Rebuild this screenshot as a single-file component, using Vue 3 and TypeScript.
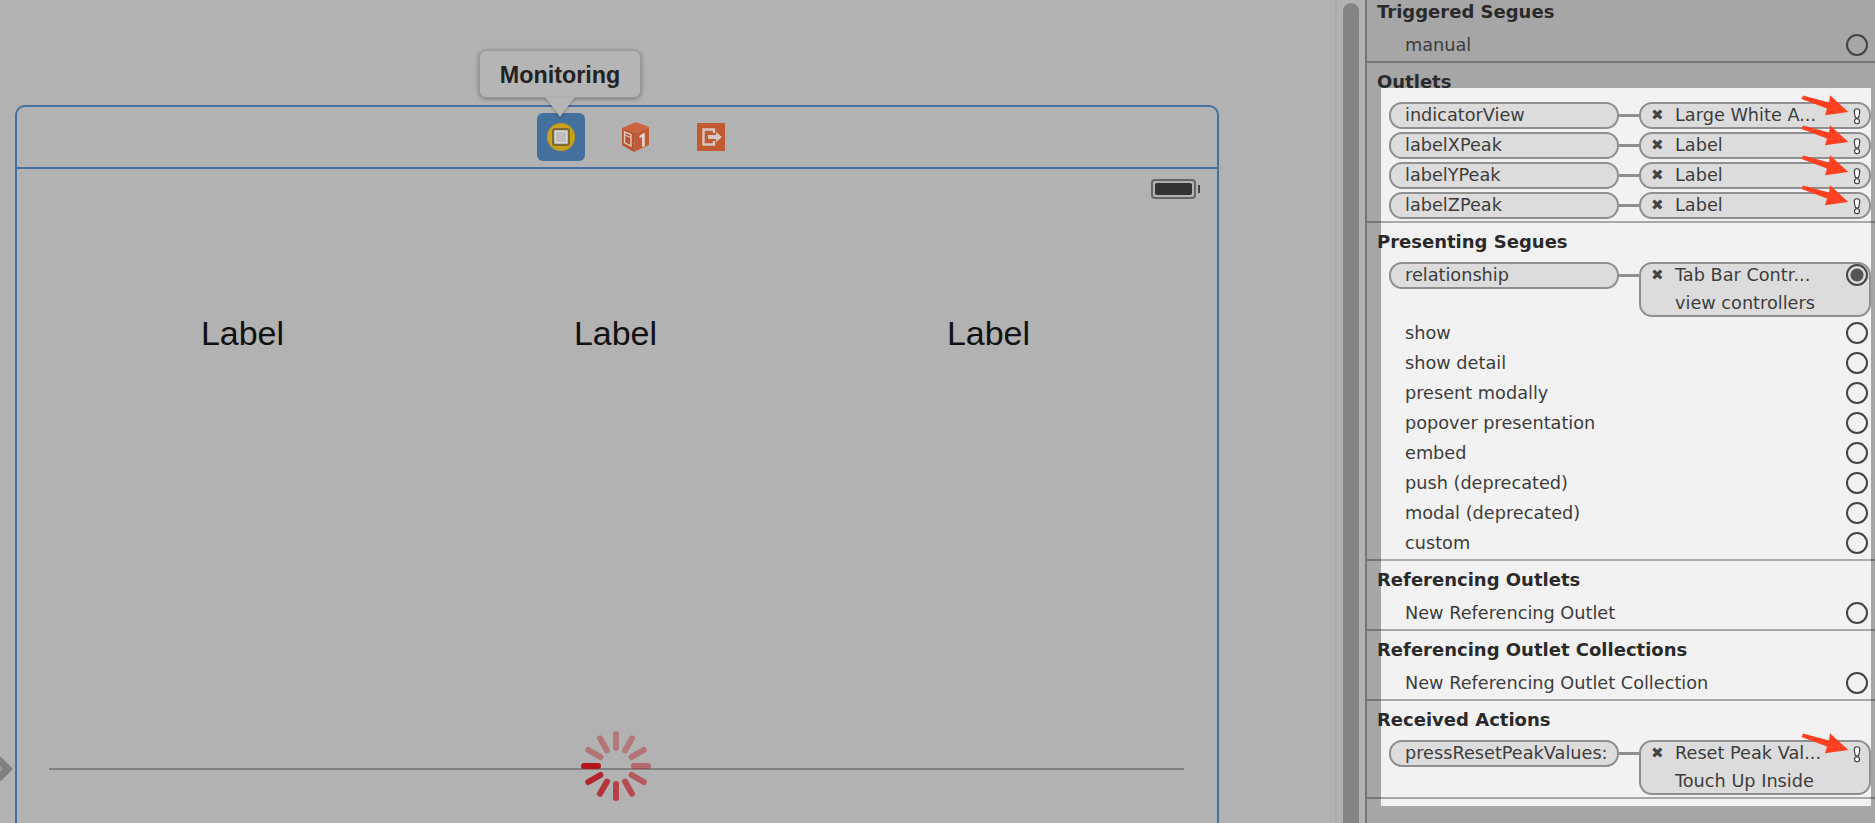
<script setup lang="ts">
interface Row {
  name: string
  target?: string
  sub?: string
  warn?: boolean
  filled?: boolean
}

interface Section {
  title: string
  rows: Row[]
}

const sections: Section[] = [
  { title: 'Triggered Segues', rows: [{ name: 'manual' }] },
  {
    title: 'Outlets',
    rows: [
      { name: 'indicatorView', target: 'Large White A...', warn: true },
      { name: 'labelXPeak', target: 'Label', warn: true },
      { name: 'labelYPeak', target: 'Label', warn: true },
      { name: 'labelZPeak', target: 'Label', warn: true },
    ],
  },
  {
    title: 'Presenting Segues',
    rows: [
      { name: 'relationship', target: 'Tab Bar Contr...', sub: 'view controllers', filled: true },
      { name: 'show' },
      { name: 'show detail' },
      { name: 'present modally' },
      { name: 'popover presentation' },
      { name: 'embed' },
      { name: 'push (deprecated)' },
      { name: 'modal (deprecated)' },
      { name: 'custom' },
    ],
  },
  { title: 'Referencing Outlets', rows: [{ name: 'New Referencing Outlet' }] },
  { title: 'Referencing Outlet Collections', rows: [{ name: 'New Referencing Outlet Collection' }] },
  {
    title: 'Received Actions',
    rows: [{ name: 'pressResetPeakValues:', target: 'Reset Peak Val...', sub: 'Touch Up Inside', warn: true }],
  },
]

const labels = ['Label', 'Label', 'Label']

const spokeOpacity = [1, 0.9, 0.8, 0.72, 0.64, 0.56, 0.46, 0.4, 0.36, 0.36, 0.38, 0.4]
const spokes = spokeOpacity.map((opacity, i) => ({ angle: 180 - i * 30, opacity }))
</script>

<template>
  <div class="app">
    <main class="canvas">
      <svg class="entry" width="14" height="30" viewBox="0 0 14 30">
        <path d="M0 3 L1 3 L13 15 L1 27 L0 27 Z" fill="#808080" />
        <path d="M0 12 L3 15 L0 18 Z" fill="#9a9a9a" />
      </svg>

      <section class="device">
        <header class="device-bar">
          <div class="tooltip">Monitoring</div>
          <div class="dock-item selected">
            <svg width="30" height="30" viewBox="0 0 30 30">
              <circle cx="15" cy="15" r="14" fill="#c9a11d" />
              <circle cx="15" cy="15" r="13.5" fill="none" stroke="#b8961f" stroke-width="1" />
              <rect x="7" y="7" width="16" height="16" rx="2" fill="#b8b8b8" stroke="#7d6a2c" stroke-width="2" />
              <rect x="9.5" y="9.5" width="11" height="11" fill="#bdbdbd" stroke="#f0f0f0" stroke-width="1" stroke-dasharray="1.4 1" />
            </svg>
          </div>
          <div class="dock-item">
            <svg width="30" height="32" viewBox="1 0 30 32">
              <path d="M2 7 L16 1 L29 6 L15 12 Z" fill="#c9643f" />
              <path d="M2 7 L15 12 L14 31 L2 24 Z" fill="#b9542f" />
              <path d="M15 12 L29 6 L29 24 L14 31 Z" fill="#c25b35" />
              <path d="M4.5 11 L11 13.5 L11 25 L4.5 21.5 Z" fill="none" stroke="#e3c9bd" stroke-width="1.4" />
              <path d="M4.5 14 L11 16.5" stroke="#e3c9bd" stroke-width="1.2" />
              <path d="M22 13 L24.8 11.8 L24.8 25 L22 26.3 L22 16 L19.5 17 L19.5 15 Z" fill="#e3d5cf" />
            </svg>
          </div>
          <div class="dock-item">
            <svg width="28" height="28" viewBox="0 0 28 28">
              <rect width="28" height="28" fill="#c05a33" />
              <path d="M17 10 V6.5 H6.5 V21.5 H17 V18" fill="none" stroke="#d6c8c1" stroke-width="2.4" />
              <path d="M11 12 H19 V9 L25 14 L19 19 V16 H11 Z" fill="#d6c8c1" />
            </svg>
          </div>
        </header>

        <div class="device-screen">
          <div class="status">
            <span class="battery"><i></i></span>
          </div>
          <div class="labels">
            <span v-for="(label, i) in labels" :key="i" class="ios-label">{{ label }}</span>
          </div>
          <div class="toolbar-line">
            <svg class="spinner" width="72" height="72" viewBox="-36 -36 72 72">
              <rect
                v-for="(s, i) in spokes"
                :key="i"
                x="15"
                y="-3"
                width="20"
                height="6"
                rx="3"
                fill="#b4141e"
                :opacity="s.opacity"
                :transform="`rotate(${s.angle})`"
              />
            </svg>
          </div>
        </div>
      </section>
    </main>

    <div class="scroll-track"><div class="scroll-thumb"></div></div>

    <aside class="panel">
      <div class="highlight"></div>
      <div class="sections">
        <section v-for="section in sections" :key="section.title" class="section">
          <h3>{{ section.title }}</h3>
          <div
            v-for="row in section.rows"
            :key="row.name"
            class="row"
            :class="{ linked: row.target, tall: row.sub }"
          >
            <template v-if="row.target">
              <span class="pill source">{{ row.name }}</span>
              <span class="connector"></span>
              <div class="pill dest">
                <span class="dest-main">
                  <span class="cross">✖</span>
                  <span>{{ row.target }}</span>
                </span>
                <span v-if="row.sub" class="dest-sub">{{ row.sub }}</span>
                <span v-if="row.filled" class="port filled"></span>
                <svg v-if="row.warn" class="warn" width="10" height="18" viewBox="0 0 10 18">
                  <path d="M2.2 3.6 a2.8 2.8 0 0 1 5.6 0 L7 8 a2 2 0 0 1 -4 0 Z" fill="#fff" stroke="#333" stroke-width="1.1" />
                  <circle cx="5" cy="13.2" r="2.5" fill="#fff" stroke="#333" stroke-width="1.1" />
                </svg>
                <svg v-if="row.warn" class="arrow" width="50" height="24" viewBox="0 0 50 24">
                  <path d="M3 1.5 L29 8.5 L30 1.3 L48.3 18 L25 21.3 L27 14.5 L1.5 5 Z" fill="#ff4122" />
                </svg>
              </div>
            </template>
            <template v-else>
              <span class="row-name">{{ row.name }}</span>
              <span class="port"></span>
            </template>
          </div>
        </section>
      </div>
    </aside>
  </div>
</template>

<style>
html,
body {
  margin: 0;
  background: #b2b2b2;
}
</style>

<style scoped>
.app {
  display: flex;
  width: 1875px;
  height: 823px;
  overflow: hidden;
  background: #b2b2b2;
  font-family: "DejaVu Sans", sans-serif;
  color: #333;
}

.canvas {
  position: relative;
  box-sizing: border-box;
  width: 1335px;
  flex: none;
  padding: 105px 0 0 15px;
}

.entry {
  position: absolute;
  left: 0;
  top: 754px;
}

.device {
  width: 1204px;
  height: 760px;
  box-sizing: border-box;
  border: 2px solid #43709e;
  border-bottom: none;
  border-radius: 10px 10px 0 0;
}

.device-bar {
  position: relative;
  height: 62px;
  box-sizing: border-box;
  border-bottom: 2px solid #43709e;
  display: flex;
  align-items: center;
  padding-left: 520px;
  gap: 27px;
}

.dock-item {
  width: 48px;
  height: 48px;
  display: flex;
  align-items: center;
  justify-content: center;
  flex: none;
  border-radius: 6px;
}

.dock-item.selected {
  background: #44709d;
}

.tooltip {
  position: absolute;
  left: 462px;
  top: -57px;
  width: 162px;
  height: 48px;
  box-sizing: border-box;
  display: flex;
  align-items: center;
  justify-content: center;
  padding-top: 2px;
  background: #b5b5b5;
  border: 1px solid #999;
  border-radius: 7px;
  box-shadow: 0 1px 4px rgba(0, 0, 0, 0.35);
  font-family: "Liberation Sans", sans-serif;
  font-weight: 700;
  font-size: 23.3px;
  color: #222;
  z-index: 2;
}

.tooltip::after {
  content: "";
  position: absolute;
  left: 65px;
  bottom: -20px;
  width: 0;
  height: 0;
  border-left: 15px solid transparent;
  border-right: 15px solid transparent;
  border-top: 20px solid #b5b5b5;
  filter: drop-shadow(0 1px 1px rgba(0, 0, 0, 0.3));
}

.device-screen {
  display: flex;
  flex-direction: column;
}

.status {
  display: flex;
  justify-content: flex-end;
  padding: 10px 21px 0 0;
}

.battery {
  position: relative;
  width: 45px;
  height: 20px;
  box-sizing: border-box;
  border: 2px solid #666;
  border-radius: 4px;
  padding: 2px;
}

.battery i {
  display: block;
  height: 100%;
  background: #333;
  border-radius: 2px;
}

.battery::after {
  content: "";
  position: absolute;
  right: -6px;
  top: 4px;
  width: 2px;
  height: 8px;
  background: #444;
}

.labels {
  display: grid;
  grid-template-columns: repeat(3, 373px);
  padding: 114px 0 0 39px;
}

.ios-label {
  text-align: center;
  font-family: "Liberation Sans", sans-serif;
  font-size: 34px;
  line-height: 40px;
  color: #111;
}

.toolbar-line {
  position: relative;
  margin: 415px 33px 0 32px;
  height: 2px;
  background: #808080;
}

.spinner {
  position: absolute;
  left: 531px;
  top: -38px;
}

.scroll-track {
  box-sizing: border-box;
  width: 32px;
  flex: none;
  padding: 3px 6px 0 6px;
  border-left: 2px solid #a8a8a8;
  border-right: 2px solid #777;
}

.scroll-thumb {
  height: 100%;
  background: #848484;
  border-radius: 8px 8px 0 0;
}

.panel {
  position: relative;
  flex: 1;
  background: #a6a6a6;
}

.highlight {
  position: absolute;
  left: 14px;
  top: 88px;
  width: 490px;
  height: 718px;
  background: #f2f2f2;
}

.sections {
  position: relative;
  margin-top: -7px;
}

.section {
  border-bottom: 2px solid rgba(0, 0, 0, 0.3);
}

h3 {
  margin: 0;
  height: 38px;
  line-height: 38px;
  padding-left: 10px;
  font-size: 18px;
  font-weight: 700;
  color: #2a2a2a;
}

.row {
  display: flex;
  align-items: center;
  height: 30px;
  padding: 0 7px 2px 38px;
  box-sizing: border-box;
  font-size: 17.7px;
  color: #3c3c3c;
  justify-content: space-between;
}

.row.linked {
  padding: 1px 0 0 22px;
  justify-content: flex-start;
  align-items: flex-start;
}

.row.tall {
  height: 58px;
}

.row-name {
  white-space: nowrap;
}

.port {
  box-sizing: border-box;
  width: 22px;
  height: 22px;
  border: 2px solid #444;
  border-radius: 50%;
  flex: none;
}

.pill {
  box-sizing: border-box;
  border: 2px solid #8f8f8f;
  border-radius: 13px;
  background: #dcdcdc;
  white-space: nowrap;
}

.source {
  width: 230px;
  height: 27px;
  line-height: 23px;
  padding-left: 14px;
}

.connector {
  width: 20px;
  height: 3px;
  margin-top: 12px;
  background: #8f8f8f;
  flex: none;
}

.dest {
  position: relative;
  width: 232px;
  flex: none;
  min-height: 27px;
  line-height: 23px;
  display: flex;
  flex-direction: column;
  padding-left: 10px;
}

.row.tall .dest {
  height: 55px;
}

.dest-main {
  display: flex;
}

.cross {
  width: 24px;
  font-size: 15px;
  color: #444;
}

.dest-sub {
  padding: 5px 0 0 24px;
}

.dest .port.filled {
  position: absolute;
  right: 1px;
  top: 0;
  background: radial-gradient(circle, #555 0 6px, #dcdcdc 7px);
}

.warn {
  position: absolute;
  right: 7px;
  top: 4px;
}

.arrow {
  position: absolute;
  right: 19px;
  top: -10px;
}
</style>
